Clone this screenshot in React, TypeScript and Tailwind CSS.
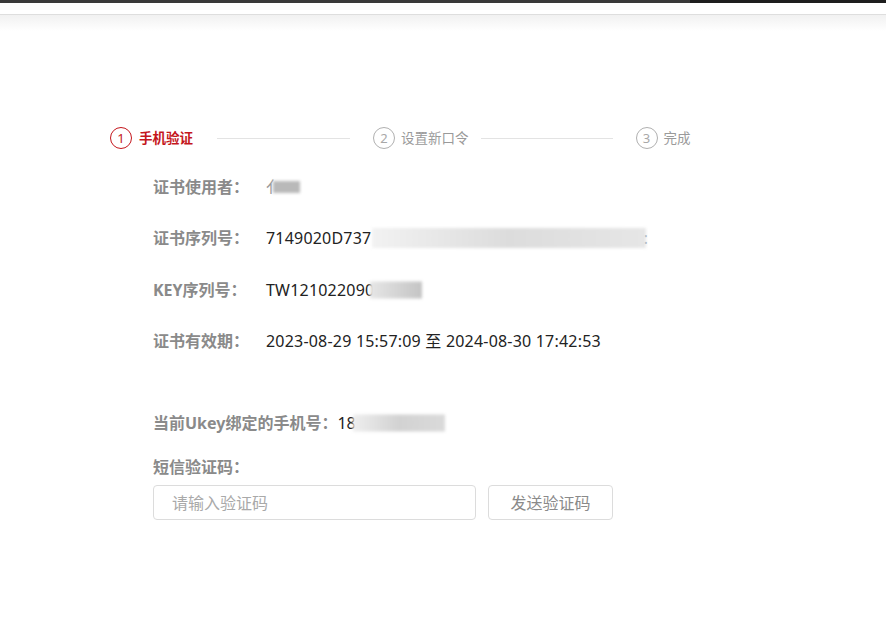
import React from 'react';

const font = { fontFamily: '"Noto Sans", "Noto Sans CJK SC", sans-serif' };

function StepCircle({ n, active }: { n: number; active?: boolean }) {
  return (
    <div
      className={`w-[22px] h-[22px] rounded-full border-[1.5px] flex items-center justify-center text-[13px] leading-none shrink-0 ${
        active ? 'border-[#c4161c] text-[#c4161c]' : 'border-[#b0b0b0] text-[#a8a8a8]'
      }`}
    >
      {n}
    </div>
  );
}

// masked (redacted) part of a value
function Blur({ className }: { className: string }) {
  return <div className={`absolute top-1/2 -translate-y-1/2 blur-[1.5px] ${className}`} />;
}

function InfoRow({ label, children }: { label: string; children: React.ReactNode }) {
  return (
    <div className="h-[51.5px] flex items-center">
      <div className="w-[113px] shrink-0 text-[16px] font-bold text-[#8a8a8a]">{label}</div>
      <div className="relative flex items-center text-[16px] text-[#222] tracking-[0.2px]">{children}</div>
    </div>
  );
}

export default function App() {
  return (
    <div className="w-[886px] h-[634px] bg-white overflow-hidden" style={font}>
      {/* top strip */}
      <div className="flex h-[3px]">
        <div className="w-[690px] bg-[#3a3a3a]" />
        <div className="flex-1 bg-[#1e1e1e]" />
      </div>
      <div className="h-[11px] bg-white" />
      <div className="h-px bg-[#dedede]" />
      <div className="h-[16px] bg-gradient-to-b from-[#f1f1f1] to-white" />

      {/* steps */}
      <div className="mt-[96px] pl-[110px] flex items-center h-[22px]">
        <StepCircle n={1} active />
        <span className="ml-[7px] text-[13.5px] font-bold text-[#c4161c]">手机验证</span>
        <div className="ml-[24px] w-[133px] h-px bg-[#e3e3e3]" />
        <div className="ml-[23px]">
          <StepCircle n={2} />
        </div>
        <span className="ml-[6px] text-[13.5px] text-[#9a9a9a]">设置新口令</span>
        <div className="ml-[12px] w-[132px] h-px bg-[#e3e3e3]" />
        <div className="ml-[23px]">
          <StepCircle n={3} />
        </div>
        <span className="ml-[6px] text-[13.5px] text-[#9a9a9a]">完成</span>
      </div>

      {/* certificate info */}
      <div className="mt-[12px] pl-[153px]">
        <InfoRow label="证书使用者：">
          <span className="text-[#999]">亻</span>
          <Blur className="left-[7px] w-[27px] h-[12px] bg-[#b9b9b9]" />
        </InfoRow>
        <InfoRow label="证书序列号：">
          <span>7149020D737</span>
          <div className="w-[272px] h-[16px]" />
          <span className="text-[#888]">:</span>
          <Blur className="left-[106px] w-[274px] h-[20px] bg-gradient-to-r from-[#f2f2f2] via-[#dcdcdc] to-[#e6e6e6]" />
        </InfoRow>
        <InfoRow label="KEY序列号：">
          <span>TW121022090</span>
          <div className="w-[48px] h-[16px]" />
          <Blur className="left-[104px] w-[52px] h-[17px] bg-gradient-to-r from-[#e6e6e6] to-[#c4c4c4]" />
        </InfoRow>
        <InfoRow label="证书有效期：">
          <span>2023-08-29 15:57:09 至 2024-08-30 17:42:53</span>
        </InfoRow>

        {/* phone */}
        <div className="mt-[44px] h-[24px] flex items-center">
          <span className="text-[16px] font-bold text-[#8a8a8a]">当前Ukey绑定的手机号：</span>
          <div className="relative flex items-center">
            <span className="text-[16px] text-[#222]">18</span>
            <div className="w-[92px] h-[16px]" />
            <Blur className="left-[16px] w-[92px] h-[17px] bg-gradient-to-r from-[#eeeeee] via-[#d2d2d2] to-[#dadada]" />
          </div>
        </div>

        <div className="mt-[20px] h-[24px] flex items-center text-[16px] font-bold text-[#8a8a8a]">短信验证码：</div>

        <div className="mt-[6px] flex gap-[12px]">
          <input
            placeholder="请输入验证码"
            className="w-[323px] h-[35px] border border-[#dcdcdc] rounded-[4px] px-[18px] text-[16px] placeholder:text-[#a9a9a9] outline-none"
          />
          <button className="w-[125px] h-[35px] border border-[#dcdcdc] rounded-[4px] text-[16px] text-[#8a8a8a] bg-white">
            发送验证码
          </button>
        </div>
      </div>
    </div>
  );
}
